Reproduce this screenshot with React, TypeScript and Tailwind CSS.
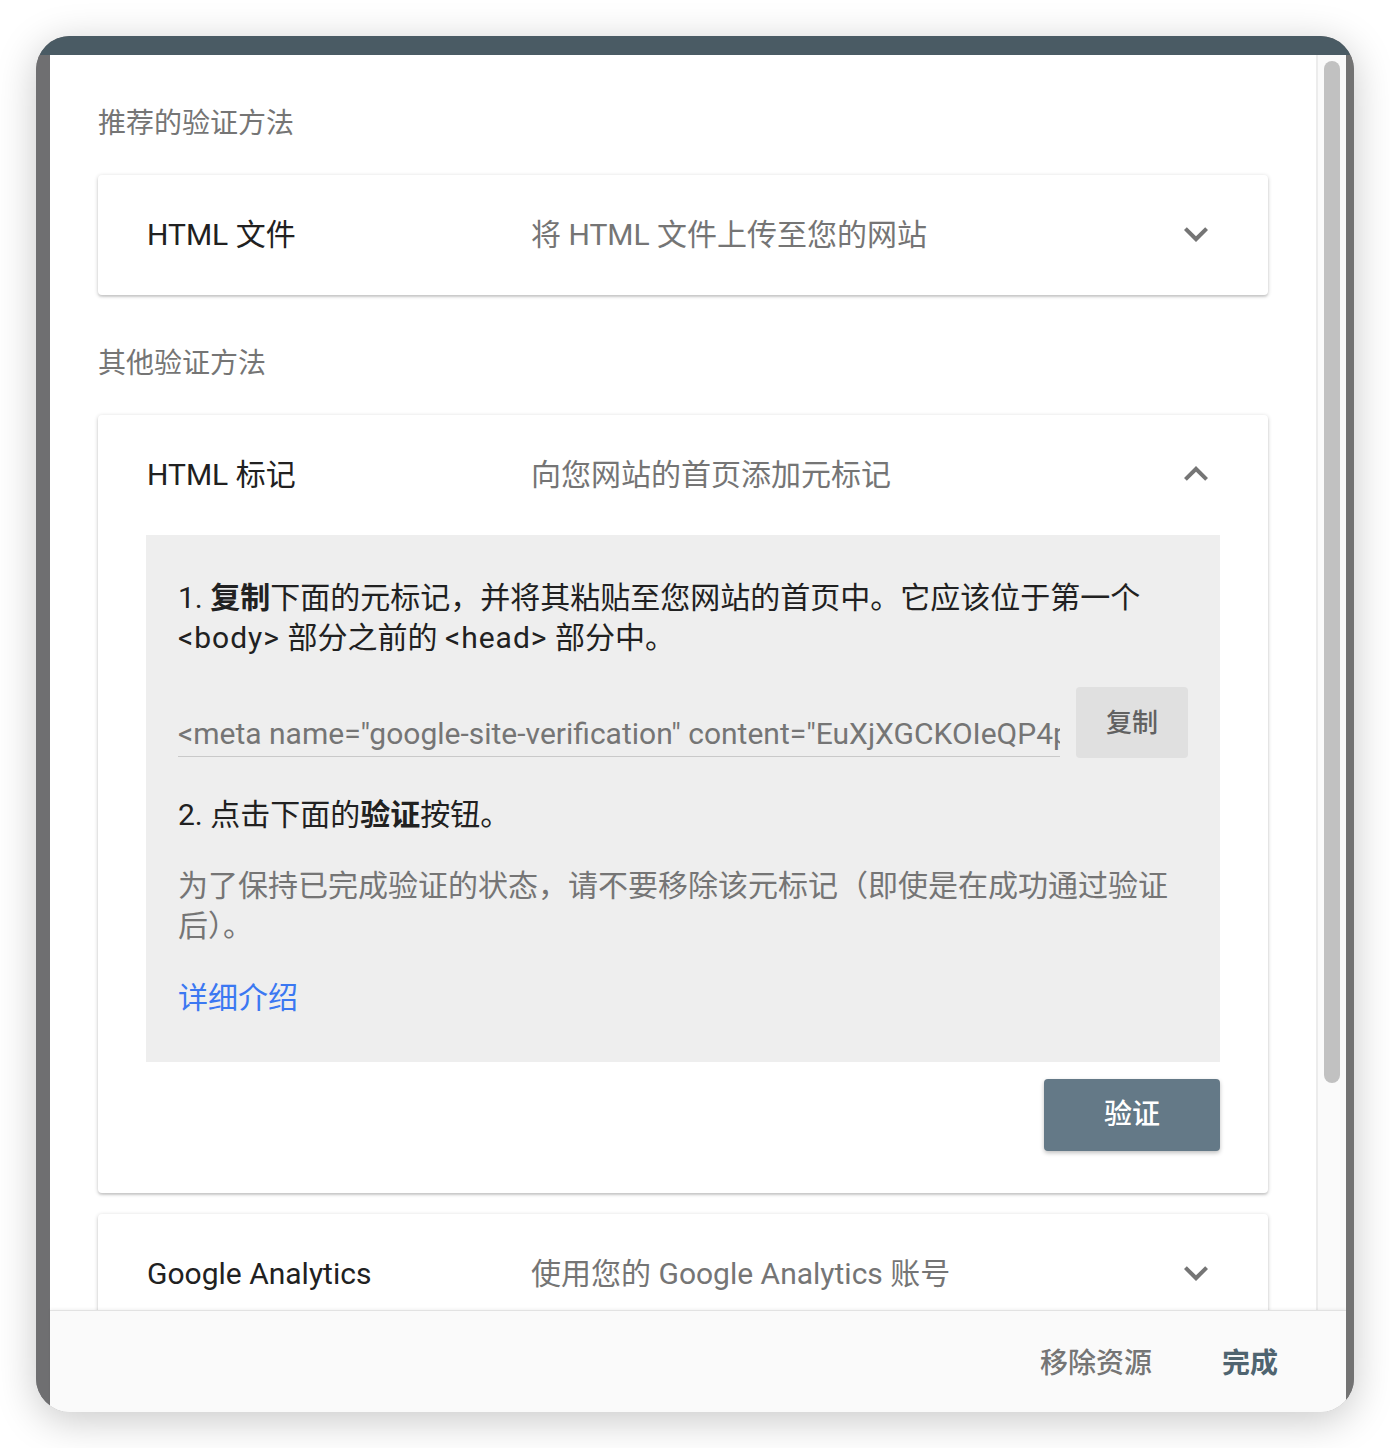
import React from "react"

const font = { fontFamily: 'Roboto, "Noto Sans CJK SC", sans-serif' }

function Chevron({ up = false }: { up?: boolean }) {
  return (
    <svg width="48" height="48" viewBox="0 0 24 24" className="shrink-0 text-[#757575]">
      {up ? (
        <path d="M7.41 15.41L12 10.83l4.59 4.58L18 14l-6-6-6 6z" fill="currentColor" />
      ) : (
        <path d="M16.59 8.59L12 13.17 7.41 8.59 6 10l6 6 6-6z" fill="currentColor" />
      )}
    </svg>
  )
}

function CardHeader({ title, subtitle, open = false }: { title: string; subtitle: string; open?: boolean }) {
  return (
    <div className="flex h-[120px] items-center pb-[2px] pl-[49px] pr-[48px]">
      <div className="w-[384px] shrink-0 text-[30px] text-[#212121]">{title}</div>
      <div className="flex-1 text-[30px] text-[#757575]">{subtitle}</div>
      <Chevron up={open} />
    </div>
  )
}

const cardShadow =
  "rounded-[4px] bg-white shadow-[0_1px_4px_rgba(0,0,0,0.2),0_2px_2px_rgba(0,0,0,0.1)]"

export default function App() {
  return (
    <div className="h-[1448px] w-[1390px] bg-white p-9" style={font}>
      <div className="flex h-[1376px] w-[1318px] flex-col overflow-hidden rounded-[34px] bg-[#6f6f71] shadow-[0_8px_40px_rgba(0,0,0,0.22)]">
        {/* title bar */}
        <div className="h-[19px] shrink-0 bg-[#4a5b64]" />

        <div className="flex min-h-0 flex-1">
          <div className="w-[14px] shrink-0 bg-[#6f6f71]" />

          <div className="flex min-w-0 flex-1 flex-col bg-white">
            <div className="flex min-h-0 flex-1">
              {/* scroll content */}
              <div className="min-w-0 flex-1 overflow-hidden px-12 pt-[49px]">
                <div className="h-10 text-[28px] leading-10 text-[#757575]">推荐的验证方法</div>
                <div className={`mt-[31px] ${cardShadow}`}>
                  <CardHeader title="HTML 文件" subtitle="将 HTML 文件上传至您的网站" />
                </div>

                <div className="mt-[49px] h-10 text-[28px] leading-10 text-[#757575]">其他验证方法</div>
                <div className={`mt-[31px] pb-[42px] ${cardShadow}`}>
                  <CardHeader title="HTML 标记" subtitle="向您网站的首页添加元标记" open />
                  <div className="mx-12 bg-[#eeeeee] px-8 pb-[44px] pt-[43px]">
                    <p className="text-[30px] leading-10 text-[#212121]">
                      1. <b className="font-bold">复制</b>下面的元标记，并将其粘贴至您网站的首页中。它应该位于第一个{" "}
                      <span className="tracking-[1px]">&lt;body&gt;</span> 部分之前的{" "}
                      <span className="tracking-[1px]">&lt;head&gt;</span> 部分中。
                    </p>
                    <div className="mt-[29px] flex gap-4">
                      <div className="mt-[24px] h-[46px] min-w-0 flex-1 overflow-hidden whitespace-nowrap border-b border-[#c9c9c9] text-[30px] leading-[46px] text-[#757575]">
                        &lt;meta name="google-site-verification" content="EuXjXGCKOIeQP4pVzSd1nAqCwXbgtPk3" /&gt;
                      </div>
                      <button className="h-[71px] w-[112px] shrink-0 rounded-[4px] bg-[#e0e0e0] pt-[2px] text-[26px] font-medium text-[#616161]">
                        复制
                      </button>
                    </div>
                    <p className="mt-[37px] text-[30px] leading-10 text-[#212121]">
                      2. 点击下面的<b className="font-bold">验证</b>按钮。
                    </p>
                    <p className="mt-[31px] text-[30px] leading-10 text-[#757575]">
                      为了保持已完成验证的状态，请不要移除该元标记（即使是在成功通过验证后）。
                    </p>
                    <a className="mt-8 block text-[30px] leading-10 text-[#3b78f2]">详细介绍</a>
                  </div>
                  <div className="mt-[17px] flex justify-end pr-12">
                    <button className="h-[72px] w-[176px] rounded-[4px] bg-[#647987] text-[28px] font-medium text-white shadow-[0_2px_4px_rgba(0,0,0,0.25)]">
                      验证
                    </button>
                  </div>
                </div>

                <div className={`mt-[21px] ${cardShadow}`}>
                  <CardHeader title="Google Analytics" subtitle="使用您的 Google Analytics 账号" />
                </div>
              </div>

              {/* scrollbar */}
              <div className="w-[30px] shrink-0 border-l-2 border-[#ececec] bg-[#fafafa] pl-[6px] pt-[6px]">
                <div className="h-[1022px] w-4 rounded-full bg-[#c1c1c1]" />
              </div>
            </div>

            {/* footer */}
            <div className="flex h-[102px] shrink-0 items-center justify-end gap-[70px] border-t border-[#e2e2e2] bg-[#fafafa] pr-[68px] pt-1 shadow-[0_-1px_3px_rgba(0,0,0,0.06)]">
              <button className="text-[28px] font-medium text-[#757575]">移除资源</button>
              <button className="text-[28px] font-bold text-[#4f6470]">完成</button>
            </div>
          </div>

          <div className="w-2 shrink-0 bg-[#737373]" />
        </div>
      </div>
    </div>
  )
}
